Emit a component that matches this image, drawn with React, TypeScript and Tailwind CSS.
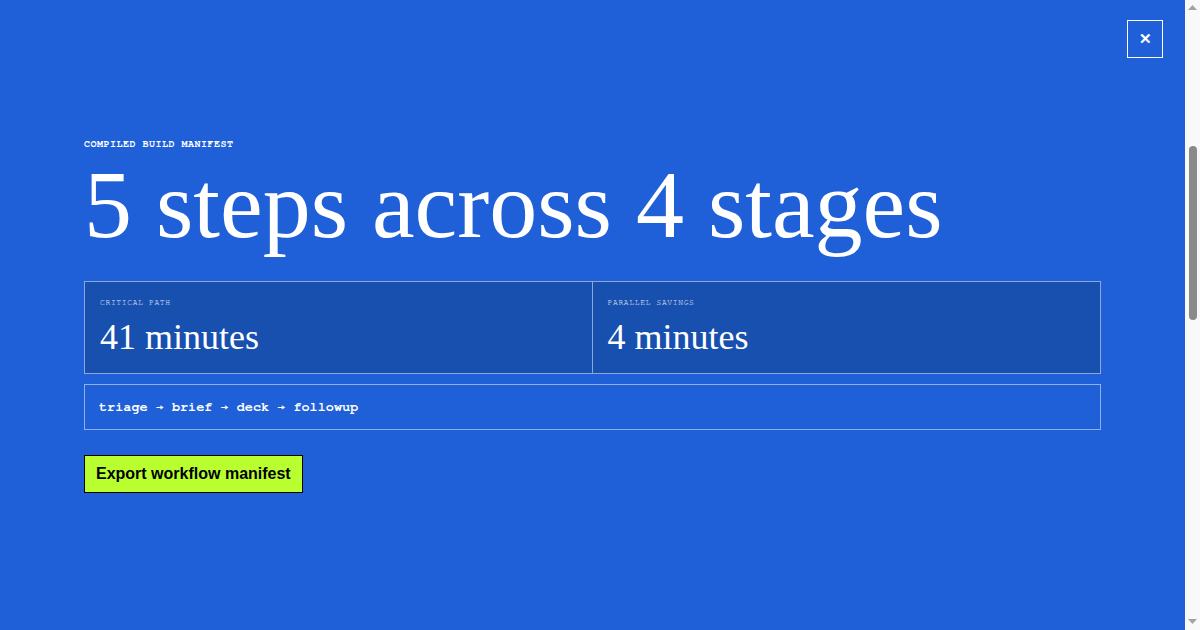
const mono =
  "font-['Nimbus_Mono_PS','Nimbus_Mono_L','FreeMono','Courier_10_Pitch','Courier_New',monospace]";
const serif = "font-['Liberation_Serif','Times_New_Roman',serif]";

const Stat = ({ label, value, last }: { label: string; value: string; last?: boolean }) => (
  <div className={`px-[15px] pb-[13px] pt-[15px] ${last ? "" : "border-r border-white/50"}`}>
    <p className={`${mono} text-[8px] uppercase leading-[12px] tracking-[0.08em] text-white/90`}>
      {label}
    </p>
    <p className={`${serif} mt-[6px] text-[36px] leading-[45px]`}>{value}</p>
  </div>
);

const App = () => {
  return (
    <div className="flex h-screen w-full overflow-hidden">
      {/* Manifest overlay */}
      <div className="relative flex-1 bg-[#1f60d8] text-white">
        <button className="absolute right-[22px] top-5 flex h-[38px] w-9 items-center justify-center border border-white text-[15px] font-bold font-['Liberation_Sans',Arial,sans-serif]">
          ✕
        </button>

        <div className="px-[84px] pt-[137px]">
          <p className={`${mono} text-[10px] font-bold uppercase leading-[15px] tracking-[0.05em]`}>
            Compiled build manifest
          </p>
          <h1 className={`${serif} mt-[5px] text-[96px] leading-none`}>5 steps across 4 stages</h1>

          <div className="mt-[28px] grid grid-cols-2 border border-white/50 bg-[#1850b0]">
            <Stat label="Critical path" value="41 minutes" />
            <Stat label="Parallel savings" value="4 minutes" last />
          </div>

          <div className="mt-[10px] border border-white/50 px-[14px] py-[13px]">
            <p className={`${mono} text-[13.5px] font-bold leading-[18px]`}>
              triage → brief → deck → followup
            </p>
          </div>

          <button className="mt-[25px] border border-black bg-[#b9ff2f] px-[11px] py-[6px] text-[16px] font-bold leading-6 text-black font-['Liberation_Sans',Arial,sans-serif]">
            Export workflow manifest
          </button>
        </div>
      </div>

      {/* scrollbar strip */}
      <div className="flex w-[15px] flex-col items-center bg-[#f9f9f9]">
        <svg width="9" height="5" viewBox="0 0 9 5" className="mt-[5px]">
          <path d="M4.5 0 L9 5 L0 5 Z" fill="#a3a3a3" />
        </svg>
        <div className="mt-[136px] h-[174px] w-2 rounded-full bg-[#8a8a8a]" />
        <div className="flex-1" />
        <svg width="9" height="5" viewBox="0 0 9 5" className="mb-[6px]">
          <path d="M0 0 L9 0 L4.5 5 Z" fill="#a3a3a3" />
        </svg>
      </div>
    </div>
  );
};

export default App;
